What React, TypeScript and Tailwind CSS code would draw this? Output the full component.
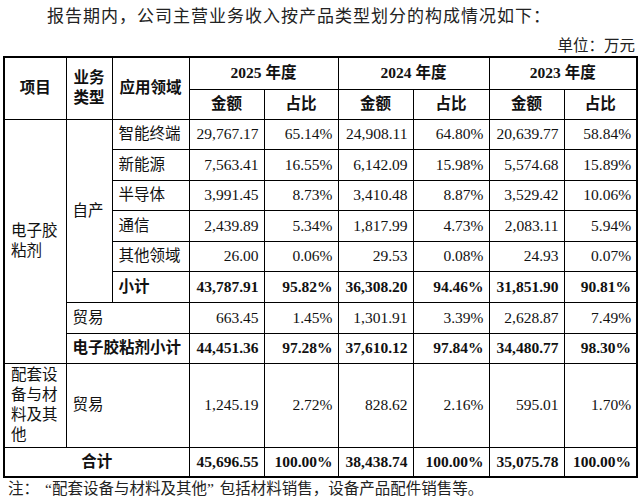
import React from "react";

const F = "font-['Liberation_Serif','Noto_Sans_CJK_SC',serif]";

type Row = { label: string; vals: string[]; bold?: boolean; h: string };

const ziRows: Row[] = [
  { label: "智能终端", vals: ["29,767.17", "65.14%", "24,908.11", "64.80%", "20,639.77", "58.84%"], h: "h-[30px]" },
  { label: "新能源", vals: ["7,563.41", "16.55%", "6,142.09", "15.98%", "5,574.68", "15.89%"], h: "h-[31px]" },
  { label: "半导体", vals: ["3,991.45", "8.73%", "3,410.48", "8.87%", "3,529.42", "10.06%"], h: "h-[30px]" },
  { label: "通信", vals: ["2,439.89", "5.34%", "1,817.99", "4.73%", "2,083.11", "5.94%"], h: "h-[31px]" },
  { label: "其他领域", vals: ["26.00", "0.06%", "29.53", "0.08%", "24.93", "0.07%"], h: "h-[30px]" },
  { label: "小计", vals: ["43,787.91", "95.82%", "36,308.20", "94.46%", "31,851.90", "90.81%"], bold: true, h: "h-[31px]" },
];

const td = "border border-black p-0 align-middle";
const num = `${td} text-right pr-[5px]`;
const txt = `${td} text-left pl-[6px] pr-[4px]`;
const head = `${td} text-center font-bold`;

function Nums({ vals, bold }: { vals: string[]; bold?: boolean }) {
  return (
    <>
      {vals.map((v, i) => (
        <td key={i} className={`${num} ${bold ? "font-bold" : ""}`}>
          {v}
        </td>
      ))}
    </>
  );
}

export default function App() {
  return (
    <div className={`w-[641px] h-[500px] bg-white text-[#111] ${F} overflow-hidden`}>
      <div className="h-[33px] flex items-center pl-[47px] text-[17px] tracking-[1px] text-[#222]">
        报告期内，公司主营业务收入按产品类型划分的构成情况如下：
      </div>
      <div className="h-[23px] leading-[26px] text-right pr-[6px] text-[15.5px] text-[#222]">单位：万元</div>
      <table className="ml-[3px] w-[635px] table-fixed border-collapse border-2 border-black text-[15.5px] leading-[20px]">
        <colgroup>
          <col className="w-[62px]" />
          <col className="w-[46px]" />
          <col className="w-[77px]" />
          <col className="w-[75px]" />
          <col className="w-[74px]" />
          <col className="w-[75px]" />
          <col className="w-[76px]" />
          <col className="w-[75px]" />
          <col className="w-[73px]" />
        </colgroup>
        <tbody>
          <tr className="h-[32px]">
            <td rowSpan={2} className={head}>项目</td>
            <td rowSpan={2} className={`${head} px-[7px]`}>业务类型</td>
            <td rowSpan={2} className={head}>应用领域</td>
            <td colSpan={2} className={head}>2025 年度</td>
            <td colSpan={2} className={head}>2024 年度</td>
            <td colSpan={2} className={head}>2023 年度</td>
          </tr>
          <tr className="h-[30px]">
            <td className={head}>金额</td>
            <td className={head}>占比</td>
            <td className={head}>金额</td>
            <td className={head}>占比</td>
            <td className={head}>金额</td>
            <td className={head}>占比</td>
          </tr>
          {ziRows.map((r, i) => (
            <tr key={r.label} className={r.h}>
              {i === 0 && (
                <>
                  <td rowSpan={8} className={txt}>电子胶粘剂</td>
                  <td rowSpan={6} className={txt}>自产</td>
                </>
              )}
              <td className={`${txt} ${r.bold ? "font-bold" : ""}`}>{r.label}</td>
              <Nums vals={r.vals} bold={r.bold} />
            </tr>
          ))}
          <tr className="h-[31px]">
            <td colSpan={2} className={txt}>贸易</td>
            <Nums vals={["663.45", "1.45%", "1,301.91", "3.39%", "2,628.87", "7.49%"]} />
          </tr>
          <tr className="h-[30px]">
            <td colSpan={2} className={`${txt} font-bold`}>电子胶粘剂小计</td>
            <Nums vals={["44,451.36", "97.28%", "37,610.12", "97.84%", "34,480.77", "98.30%"]} bold />
          </tr>
          <tr className="h-[84px]">
            <td className={txt}>配套设备与材料及其他</td>
            <td colSpan={2} className={txt}>贸易</td>
            <Nums vals={["1,245.19", "2.72%", "828.62", "2.16%", "595.01", "1.70%"]} />
          </tr>
          <tr className="h-[30px]">
            <td colSpan={3} className={`${head}`}>合计</td>
            <Nums vals={["45,696.55", "100.00%", "38,438.74", "100.00%", "35,075.78", "100.00%"]} bold />
          </tr>
        </tbody>
      </table>
      <div className="h-[20px] leading-[20px] mt-[1px] pl-[8px] text-[15.5px] text-[#222] whitespace-nowrap">
        注：<span className="pl-[6px]">“</span>配套设备与材料及其他<span className="pr-[6px]">”</span>包括材料销售，设备产品配件销售等。
      </div>
    </div>
  );
}
